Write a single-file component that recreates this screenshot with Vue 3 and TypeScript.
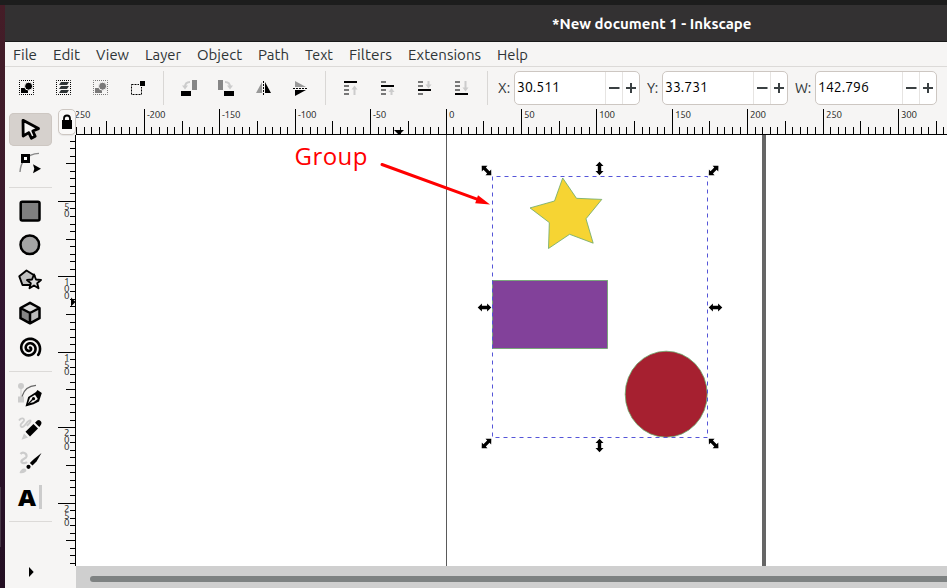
<script setup lang="ts">
interface Tick { pos: number; kind: 'major' | 'mid' | 'minor' }
interface Label { pos: number; text: string }

const STEP = 7.54

function ticks(origin: number, from: number, to: number): Tick[] {
  const out: Tick[] = []
  for (let n = Math.ceil((from - origin) / STEP); ; n++) {
    const pos = Math.floor(origin + n * STEP + 0.01)
    if (pos >= to) break
    if (pos < from) continue
    out.push({ pos, kind: n % 10 === 0 ? 'major' : n % 5 === 0 ? 'mid' : 'minor' })
  }
  return out
}

function labels(origin: number, first: number, last: number): Label[] {
  const out: Label[] = []
  for (let k = first; k <= last; k++) {
    out.push({ pos: Math.floor(origin + k * STEP * 10 + 0.01), text: String(k * 50) })
  }
  return out
}

function spiral(cx: number, cy: number, radius: number, turns: number, endDeg: number): string {
  const pts: string[] = []
  for (let i = 0; i <= 70; i++) {
    const t = i / 70
    const a = ((endDeg - (1 - t) * turns * 360) * Math.PI) / 180
    const r = 0.8 + (radius - 0.8) * t
    pts.push(`${(cx + r * Math.cos(a)).toFixed(2)},${(cy + r * Math.sin(a)).toFixed(2)}`)
  }
  return pts.join(' ')
}

const hTicks = ticks(446, 76, 947)
const hLabels = labels(446, -5, 6)
const vTicks = ticks(126, 136, 566)
const vLabels = labels(126, 1, 5)
const hTop = { major: 109, mid: 121, minor: 127 }
const vLeft = { major: 58, mid: 66, minor: 70 }
const spiralPoints = spiral(29.5, 348.2, 11, 2.25, 38)

const menus = [
  { name: 'File', width: 24 }, { name: 'Edit', width: 27 }, { name: 'View', width: 33 },
  { name: 'Layer', width: 36 }, { name: 'Object', width: 45 }, { name: 'Path', width: 31 },
  { name: 'Text', width: 28 }, { name: 'Filters', width: 43 }, { name: 'Extensions', width: 73 },
  { name: 'Help', width: 31 },
]

const fields = [
  { name: 'X', value: '30.511', cls: 'fx' },
  { name: 'Y', value: '33.731', cls: 'fy' },
  { name: 'W', value: '142.796', cls: 'fw' },
]

const stackIcons = [
  { bar: 0, shaft: [7, 7], head: 'M7.5 8.500 10.500 4.500 13.500 8.500Z' },
  { bar: 1, shaft: [10, 4], head: 'M7.5 11 10.500 7 13.500 11Z' },
  { bar: 2, shaft: [0, 4], head: 'M7.5 3.500 10.500 7.500 13.500 3.500Z' },
  { bar: 3, shaft: [0, 7], head: 'M7.5 6.500 10.500 10.500 13.500 6.500Z' },
]

const ARROW = 'M0-6.8 4-2.6H1.7V2.6H4L0 6.8-4 2.6H-1.7V-2.6H-4Z'
const handles = [
  { x: 486.5, y: 170.5, r: -45 }, { x: 599.5, y: 168.5, r: 0 }, { x: 713.6, y: 170.5, r: 45 },
  { x: 484.5, y: 307.5, r: 90 }, { x: 715.5, y: 307.5, r: 90 },
  { x: 486.5, y: 443.5, r: 45 }, { x: 599.5, y: 445.5, r: 0 }, { x: 713.6, y: 443.5, r: -45 },
]
</script>

<template>
  <div class="screen">
    <div class="topbar"></div>
    <div class="desktop">
      <div class="wallpaper"><i></i></div>
      <div class="window">
        <header class="title"><svg width="200" height="36"><text x="0" y="24" textLength="199.500" lengthAdjust="spacingAndGlyphs">*New document 1 - Inkscape</text></svg></header>

        <nav class="menubar">
          <svg v-for="m in menus" :key="m.name" :width="m.width" height="24" class="menu">
            <text x="0" y="18" :textLength="m.width" lengthAdjust="spacingAndGlyphs">{{ m.name }}</text>
          </svg>
        </nav>

        <div class="toolbar">
          <div class="group">
            <svg class="tb" viewBox="8 71 37 34"><rect x="19.5" y="80.5" width="14" height="14" class="dots" /><rect x="21" y="88" width="7" height="5" /><circle cx="28.6" cy="86.2" r="4" stroke="#f6f5f4" stroke-width="1" /></svg>
            <svg class="tb" viewBox="45 71 37 34"><rect x="56.5" y="80.5" width="14" height="14" class="dots" /><path fill="#2e3436" d="M61 82h8l-2 3h-8zM61 86h8l-2 3h-8zM61 90h8l-2 3h-8z" /></svg>
            <svg class="tb dim" viewBox="8 71 37 34"><rect x="19.5" y="80.5" width="14" height="14" class="dots" /><rect x="21" y="88" width="7" height="5" /><circle cx="28.6" cy="86.2" r="4" stroke="#f6f5f4" stroke-width="1" /></svg>
            <svg class="tb" viewBox="119 71 37 34"><rect x="131.5" y="84.5" width="10" height="10" class="dashes" /><rect x="139" y="80" width="7" height="7" fill="#f6f5f4" /><rect x="140" y="81" width="5" height="5" /></svg>
          </div>
          <div class="group">
            <svg class="tb" viewBox="170 71 37 34"><rect x="181" y="91" width="10" height="5" /><rect x="192" y="80" width="5" height="10" fill="#868686" /><path d="M190 82Q185 82 185 87" class="turn" /><path fill="#ccc" d="M182 85.5h6l-3 4z" /></svg>
            <svg class="tb" viewBox="207 71 37 34"><rect x="224" y="91" width="10" height="5" /><rect x="218" y="80" width="5" height="10" fill="#868686" /><path d="M225 82Q230 82 230 87" class="turn" /><path fill="#ccc" d="M227 85.5h6l-3 4z" /></svg>
            <svg class="tb" viewBox="244 71 37 34"><path fill="#999" d="M262 82v11h-6z" /><path d="M265 82v11h6z" /><path d="M263.5 81v14" class="axis" /></svg>
            <svg class="tb" viewBox="281 71 37 34"><path fill="#999" d="M295 81v6h11z" /><path d="M295 90h11l-11 6z" /><path d="M293 88.5h14" class="axis" /></svg>
          </div>
          <div class="group">
            <svg v-for="s in stackIcons" :key="s.bar" class="tb" viewBox="-12 -10 37 34">
              <template v-for="n in 4" :key="n">
                <rect v-if="n - 1 === s.bar" x="0" :y="(n - 1) * 4" width="13" height="2" />
                <rect v-else x="0" :y="(n - 1) * 4" width="5" height="2" fill="#777" />
              </template>
              <rect x="9.500" :y="s.shaft[0]" width="2" :height="s.shaft[1]" fill="#ccc" />
              <path :d="s.head" fill="#ccc" />
            </svg>
          </div>
          <div class="fields">
            <label v-for="f in fields" :key="f.name" :class="['field', f.cls]">
              <span class="name">{{ f.name }}:</span>
              <span class="entry">
                <span class="value">{{ f.value }}</span>
                <span class="step"><svg width="11" height="11"><path d="M0 5h10.5" /></svg></span>
                <span class="step"><svg width="11" height="11"><path d="M0 5h10M5 0v10" /></svg></span>
              </span>
            </label>
          </div>
        </div>

        <main class="work">
          <aside class="tools">
            <div class="tool active"><svg viewBox="9 113 43 34"><path fill="#f6f5f4" stroke="#000" stroke-width="2.8" stroke-linejoin="round" d="M23 120.3 38.5 128.6 32.8 131 35.2 136.300 31.4 138.2 28.8 132.6 23.2 136Z" /></svg></div>
            <div class="tool"><svg viewBox="9 147 43 34"><path fill="none" stroke="#888" stroke-width="1.4" d="M20 172Q20.500 164 24.500 160 30 153.500 39 153.400" /><path d="M21 154h9v9h-9z" /><path fill="#fff" d="M24 157h3v3h-3z" /><path d="M33 164.200 41 168.700 33 173.200 34.300 168.700Z" /></svg></div>
            <hr>
            <div class="tool"><svg viewBox="9 195 43 34"><rect x="20.700" y="201.700" width="18.800" height="18.800" rx="1.500" fill="#808080" class="line" /></svg></div>
            <div class="tool"><svg viewBox="9 229 43 34"><circle cx="29.800" cy="244.800" r="9.300" fill="#a4a4a4" class="line" /></svg></div>
            <div class="tool"><svg viewBox="9 263 43 34"><path fill="#c0c0c0" stroke="#000" stroke-width="1.900" stroke-linejoin="round" d="M26.500 270.500 34.500 275.500 32.500 285 22.500 285 19.300 276.300Z" /><path fill="#ddd" stroke="#000" stroke-width="1.900" stroke-linejoin="round" d="M34 274.500 36 279.500 41 280 37.200 283.200 38.500 288.300 34 285.500 29.500 288.300 30.800 283.200 27 280 32 279.500Z" /></svg></div>
            <div class="tool"><svg viewBox="9 297 43 34"><path fill="#ddd" d="M30 302.800 39.500 307.800 30 313 20.500 307.800Z" /><path fill="#858585" d="M20.500 307.800 30 313V323.500L20.500 318.500Z" /><path fill="#bbb" d="M39.500 307.800 30 313V323.500L39.500 318.500Z" /><path fill="none" class="line" d="M30 302.800 39.500 308V318.200L30 323.300 20.500 318.200V308ZM20.500 308 30 313 39.500 308M30 313V323" /></svg></div>
            <div class="tool"><svg viewBox="9 331 43 34"><polyline :points="spiralPoints" fill="none" stroke="#000" stroke-width="2.600" stroke-linecap="round" stroke-linejoin="round" /></svg></div>
            <hr>
            <div class="tool"><svg viewBox="9 379 43 34"><g fill="#ccc"><circle cx="21" cy="386" r="3" /><rect x="18" y="396.500" width="6" height="6" /></g><path stroke="#ccc" d="M21 388v9" /><path fill="none" stroke="#666" stroke-width="1.200" d="M22 396.500Q25 386 36 385.400" /><path d="M25.500 406.500 28.200 397 36 392 37.500 390 41.800 393 40.800 396 39 401.500 33.500 404.200Z" /><path fill="#f6f5f4" d="M28 403.500 30 397.800 35 394.700 37.800 399 33.500 402.300Z" /><path d="M26 405.500 32.500 398.500 33.500 399.500 27 406Z" /><circle cx="33.500" cy="398.700" r="1.600" /></svg></div>
            <div class="tool"><svg viewBox="9 413 43 34"><path fill="none" stroke="#ccc" stroke-width="1.800" d="M19 420.500C21 417.500 24.500 418 24 420.500 23 423 18.500 424.500 21.500 427 25 428.500 27 419.500 30.500 420.500 31.500 422 28.500 424 27 426" /><path fill="#ccc" d="M24 433.500 28 437.500 21.500 439.800Z" /><path d="M25.500 431.800 33.500 424 38 428.500 30 436.500Z" /><path d="M35 422.800 37.200 420.600Q39.500 419 41 421.500 42.500 423.500 39.300 427Z" /></svg></div>
            <div class="tool"><svg viewBox="9 447 43 34"><path fill="none" stroke="#ccc" stroke-width="2.200" d="M20.500 454C22.500 451.500 27 453 26.500 456.500 26 459 20.500 459.500 21.500 462 23 464 26 463 27 462" /><path fill="#ccc" d="M19.500 473Q21 468.200 24.500 468.500 28 470 25 472.200 22.500 473.700 19.500 473Z" /><path d="M41.500 453 36.500 461.500 32.500 465.500 29.800 463 34 459Z" /><circle cx="28.500" cy="466.800" r="2.100" /></svg></div>
            <div class="tool"><svg viewBox="9 481 43 34"><text x="18" y="506" class="glyph" textLength="18" lengthAdjust="spacingAndGlyphs">A</text><rect x="39" y="485" width="3" height="24" fill="#ccc" /></svg></div>
            <hr>
            <svg class="more" viewBox="9 562 43 20"><path d="M29 567 33.700 572 29 577Z" /></svg>
          </aside>

          <section class="stage">
            <div class="toprow">
              <div class="lock"><svg width="16" height="24" viewBox="59 110 16 24"><path fill="none" stroke="#000" stroke-width="1.800" d="M64 121V118.500Q64 115.500 67 115.500 70 115.500 70 118.500V121" /><rect x="62" y="120" width="10" height="9" /></svg></div>
              <svg class="hruler" viewBox="76 108 871 27">
                <rect v-for="t in hTicks" :key="t.pos" :x="t.pos" :y="hTop[t.kind]" width="1" :height="135 - hTop[t.kind]" />
                <rect x="76" y="134" width="871" height="1" />
                <text v-for="l in hLabels" :key="l.text" :x="l.pos + 3" y="118">{{ l.text }}</text>
                <path d="M394 130h10l-5 5z" />
              </svg>
            </div>
            <div class="midrow">
              <svg class="vruler" viewBox="58 135 18 431">
                <rect v-for="t in vTicks" :key="t.pos" :x="vLeft[t.kind]" :y="t.pos" :width="76 - vLeft[t.kind]" height="1" />
                <rect x="75" y="135" width="1" height="431" />
                <template v-for="l in vLabels" :key="l.text">
                  <text v-for="(c, i) in l.text" :key="i" x="64" :y="l.pos + 9 + i * 7">{{ c }}</text>
                </template>
                <path d="M71 297.500v9l4.500-4.500z" />
              </svg>
              <svg class="canvas" viewBox="76 135 871 431">
                <rect x="446" y="135" width="1" height="431" fill="#5a5a5a" />
                <rect x="762" y="135" width="4" height="431" fill="#666" />
                <path class="shape" fill="#f6d433" d="M562.700 178 576.500 198.300 601.800 199.400 586 218.800 593.200 243.200 569.600 234.300 548.500 248.500 549.300 222.600 530 207.900 554.500 201Z" />
                <rect class="shape" x="492.500" y="280.500" width="115" height="68" fill="#82419a" />
                <ellipse class="shape" cx="666.200" cy="394.200" rx="41" ry="43" fill="#a62030" />
                <rect x="492.500" y="176.500" width="215" height="261" class="selection" />
                <path v-for="(h, i) in handles" :key="i" :d="ARROW" :transform="`translate(${h.x} ${h.y}) rotate(${h.r})`" />
                <text x="294.500" y="165" class="note" textLength="73">Group</text>
                <path stroke="#f00" stroke-width="3" stroke-linecap="round" d="M382 164.500 479 199.800" />
                <path fill="#f00" d="M478 195.200 490 204.400 475.200 203.200Z" />
              </svg>
            </div>
            <div class="scroll"><div class="thumb"></div></div>
          </section>
        </main>
      </div>
    </div>
  </div>
</template>

<style>
body { margin: 0; overflow: hidden; }
</style>

<style scoped>
.screen { width: 947px; height: 588px; display: flex; flex-direction: column; overflow: hidden; font-family: Ubuntu, "Noto Sans", sans-serif; color: #2e3436; background: #f6f5f4; }
.screen svg { display: block; flex: none; }
.topbar { height: 5px; background: #1d1d1d; flex: none; }
.desktop { display: flex; height: 583px; }
.wallpaper { width: 5px; flex: none; background: linear-gradient(#451d27, #3b1a2b 30%, #301530 55%, #230f22); display: flex; }
.wallpaper i { width: 1px; height: 60px; margin-top: 482px; background: #463646; }
.window { width: 942px; display: flex; flex-direction: column; background: #f6f5f4; }
.title { height: 36px; flex: none; background: #333132; border-bottom: 1px solid #1a1a1a; padding-left: 547px; }
.title text { fill: #fff; font-size: 14.500px; font-weight: 700; }
.menubar { height: 24px; flex: none; display: flex; gap: 16px; padding-left: 8px; border-bottom: 1px solid #dcdad8; }
.menu { overflow: visible; }
.menu text { font-size: 14.500px; fill: #2e3436; }
.toolbar { height: 41px; flex: none; display: flex; box-sizing: border-box; padding: 4px 0 3px 3px; }
.group { display: flex; height: 34px; padding-right: 7px; margin-right: 6px; border-right: 1px solid #d9d7d5; }
.tb { width: 37px; height: 34px; }
.dim { opacity: .5; }
.dots { fill: none; stroke: #000; stroke-dasharray: 1 1; stroke-dashoffset: .5; }
.dashes { fill: none; stroke: #000; stroke-dasharray: 2 1; }
.axis { fill: none; stroke: #000; stroke-dasharray: 2 1; }
.turn { fill: none; stroke: #ccc; stroke-width: 2; }
.fields { display: flex; padding-left: 4px; }
.field { display: flex; align-items: center; height: 34px; font-size: 14px; }
.name { flex: none; white-space: nowrap; }
.fx .name { width: 16px; }
.fy .name { width: 15px; margin-left: 7px; }
.fw .name { width: 20px; margin-left: 7px; }
.entry { display: flex; width: 126px; height: 34px; box-sizing: border-box; border: 1px solid #cdc7c2; border-radius: 5px; background: #fff; }
.fw .entry { width: 122px; }
.value { flex: 1; padding-left: 2px; line-height: 31px; font-size: 14px; color: #000; }
.step { width: 16px; border-left: 1px solid #e6e4e2; display: flex; align-items: center; justify-content: center; }
.step path { stroke: #3a4042; stroke-width: 2; }
.work { height: 480px; display: flex; }
.tools { width: 43px; padding: 5px 6px 0 4px; flex: none; }
.tool { height: 34px; box-sizing: border-box; }
.tool svg { width: 43px; height: 34px; }
.active { height: 33px; margin-bottom: 1px; background: #d6d1cd; border-radius: 5px; box-shadow: inset 0 0 0 1px #cdc7c2; }
.tools hr { height: 1px; border: 0; margin: 6px 0 7px; background: #dcdad8; }
.more { width: 43px; height: 20px; margin-top: 40px; }
.line { stroke: #000; stroke-width: 2.500; stroke-linejoin: round; }
.glyph { font: 800 23px "Open Sans", "Noto Sans", sans-serif; }
.stage { width: 889px; flex: none; display: flex; flex-direction: column; }
.toprow { display: flex; height: 27px; }
.lock { width: 18px; height: 26px; margin-top: 1px; box-sizing: border-box; border: 1px solid #cdc7c2; border-radius: 5px; background: #f9f8f7; box-shadow: 0 1px 1px #0001; }
.hruler { width: 871px; height: 27px; }
.vruler { width: 18px; height: 431px; }
.hruler text, .vruler text { font-size: 9.800px; letter-spacing: -.3px; fill: #222; }
.midrow { display: flex; height: 431px; }
.canvas { width: 871px; height: 431px; background: #fff; }
.shape { stroke: #69a869; stroke-width: .8; }
.selection { fill: none; stroke: #5555d8; stroke-dasharray: 4 4; stroke-dashoffset: 4; }
.note { font: 400 24px "Open Sans", "Noto Sans", sans-serif; fill: #f00; }
.scroll { margin-left: 18px; height: 22px; background: #cfcfcf; overflow: hidden; }
.thumb { height: 6px; margin: 10px -10px 0 14px; border-radius: 3px; background: #7e8282; }
</style>
